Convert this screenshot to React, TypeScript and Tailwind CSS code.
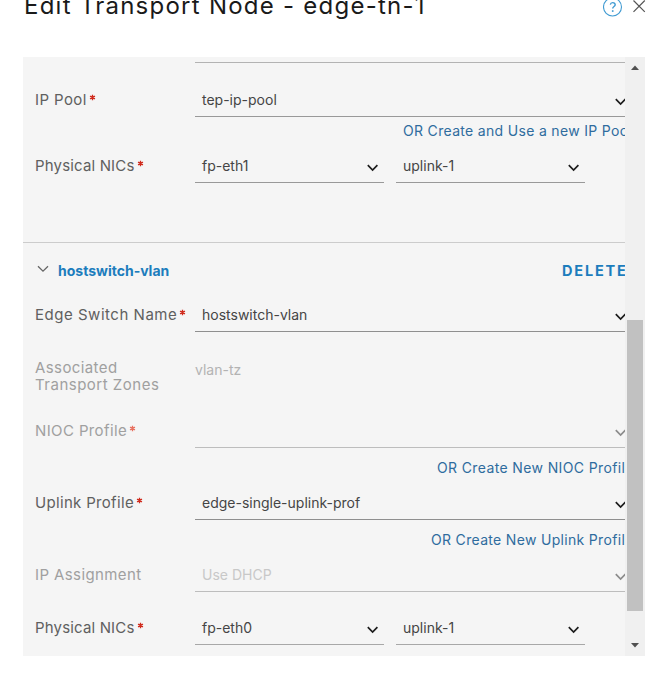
import React from "react";

type Tone = "normal" | "dim" | "disabled";

function Chevron({ className = "" }: { className?: string }) {
  return (
    <svg width="12" height="8" viewBox="0 0 12 8" fill="none" className={"shrink-0 " + className}>
      <path d="M0.8 1.2 L5.6 6 L10.4 1.2" stroke="currentColor" strokeWidth="1.7" />
    </svg>
  );
}

function Label({ text, tracking, required, dim }: { text: string; tracking: string; required?: boolean; dim?: boolean }) {
  return (
    <div className={"flex w-[160px] shrink-0 whitespace-nowrap text-[15px] leading-[32px] " + (dim ? "text-[#a0a0a0]" : "text-[#606060]")}>
      <span className={tracking}>{text}</span>
      {required && (
        <svg width="7" height="7" viewBox="0 0 8 8" className={"ml-[2px] mt-[10px] shrink-0 " + (dim ? "text-[#e8705f]" : "text-[#d02a1c]")}>
          <path d="M4 0.8V7.2M1.2 2.4L6.8 5.6M6.8 2.4L1.2 5.6" stroke="currentColor" strokeWidth="1.5" />
        </svg>
      )}
    </div>
  );
}

function Select({ value, width, line, tone = "normal" }: { value: string; width: string; line: string; tone?: Tone }) {
  const color = tone === "normal" ? "text-[#454545]" : "text-[#c8c8c8]";
  return (
    <div className={"flex h-[33px] shrink-0 items-center justify-between border-b pl-[7px] " + width + " " + line}>
      <span className={"whitespace-nowrap text-[14px] leading-[32px] " + color}>{value}</span>
      <Chevron className={"mt-[3px] mr-[5px] " + (tone === "normal" ? "text-[#1c1c1c]" : "text-[#8c8c8c]")} />
    </div>
  );
}

function Row({ children, className = "" }: { children: React.ReactNode; className?: string }) {
  return <div className={"flex pl-3 " + className}>{children}</div>;
}

function LinkText({ text, className }: { text: string; className: string }) {
  return <div className={"whitespace-nowrap text-[14px] text-[#2f6c9e] " + className}>{text}</div>;
}

function Nics({ first, line }: { first: string; line: string }) {
  return (
    <>
      <Label text="Physical NICs" tracking="tracking-[0.16px]" required />
      <Select value={first} width="w-[189px]" line={line} />
      <div className="w-3 shrink-0" />
      <Select value="uplink-1" width="w-[189px]" line={line} />
    </>
  );
}

export default function App() {
  return (
    <div className="h-[677px] w-[651px] overflow-hidden bg-white font-['Inter','Liberation_Sans',sans-serif]">
      <header className="flex h-[57px] justify-between pl-[24px] pr-[5px]">
        <h1 className="-mt-[9.5px] whitespace-nowrap text-[24px] leading-[29px] tracking-[1.25px] text-[#1a1a1a]">
          Edit Transport Node - edge-tn-1
        </h1>
        <div className="flex gap-[10px]">
          <svg width="20" height="20" viewBox="0 0 20 20" fill="none" className="-mt-[3px]" stroke="#419bd2" strokeWidth="1.1">
            <circle cx="9.5" cy="10" r="9" />
            <path d="M7.3 7.6C7.6 6.2 8.4 5.6 9.6 5.6C11.2 5.6 12.2 6.4 12.2 7.8C12.2 9.6 9.7 9.5 9.7 11.6" strokeWidth="1.4" />
            <path d="M9.7 13.2V14.9" strokeWidth="1.6" />
          </svg>
          <svg width="13" height="13" viewBox="0 0 13 13" fill="none" stroke="#555" strokeWidth="1.2">
            <path d="M0.5 0.5L11.8 11.8M11.8 0.5L0.5 11.8" />
          </svg>
        </div>
      </header>

      <main className="ml-[23px] flex h-[599px] w-[622px] bg-[#f5f5f5]">
        <section className="w-[602px] overflow-hidden">
          <div className="ml-[172px] h-[6px] w-[442px] border-b border-[#b3b3b3]" />
          <Row className="mt-[21px]">
            <Label text="IP Pool" tracking="tracking-[0.4px]" required />
            <Select value="tep-ip-pool" width="w-[437px]" line="border-[#999]" />
          </Row>
          <LinkText text="OR Create and Use a new IP Pool" className="h-[33px] pl-[380px] leading-[27px] tracking-[0.32px]" />
          <Row>
            <Nics first="fp-eth1" line="border-[#999]" />
          </Row>

          <div className="mt-[59px] border-t border-[#cccccc]" />
          <div className="flex h-[56px] pl-[14px] leading-[55px]">
            <svg width="12" height="8" viewBox="0 0 12 8" fill="none" className="mt-[22px] shrink-0">
              <path d="M1 1.2L6 6.2L11 1.2" stroke="#666" strokeWidth="1.3" />
            </svg>
            <span className="ml-[9px] w-[504px] shrink-0 text-[14px] font-bold text-[#1c7dbd]">hostswitch-vlan</span>
            <span className="shrink-0 whitespace-nowrap text-[14.5px] font-bold tracking-[1.8px] text-[#1c7dbd]">DELETE</span>
          </div>

          <Row>
            <Label text="Edge Switch Name" tracking="tracking-[0.52px]" required />
            <Select value="hostswitch-vlan" width="w-[437px]" line="border-[#8f8f8f]" />
          </Row>
          <Row className="mt-[28px] h-[55px]">
            <div className="w-[160px] shrink-0 text-[15px] leading-[16.5px] text-[#a0a0a0]">
              <div className="tracking-[0.4px]">Associated</div>
              <div className="whitespace-nowrap tracking-[0.5px]">Transport Zones</div>
            </div>
            <span className="text-[14px] leading-[20px] text-[#b3b3b3]">vlan-tz</span>
          </Row>
          <Row>
            <Label text="NIOC Profile" tracking="tracking-[0.38px]" required dim />
            <Select value="" width="w-[437px]" line="border-[#bdbdbd]" tone="dim" />
          </Row>
          <LinkText text="OR Create New NIOC Profile" className="h-[39px] pl-[414px] leading-[39px] tracking-[0.37px]" />
          <Row>
            <Label text="Uplink Profile" tracking="tracking-[0.32px]" required />
            <Select value="edge-single-uplink-prof" width="w-[437px]" line="border-[#8f8f8f]" />
          </Row>
          <LinkText text="OR Create New Uplink Profile" className="h-[39px] pl-[408px] leading-[39px] tracking-[0.32px]" />
          <Row>
            <Label text="IP Assignment" tracking="tracking-[0.4px]" dim />
            <Select value="Use DHCP" width="w-[437px]" line="border-[#bdbdbd]" tone="disabled" />
          </Row>
          <Row className="mt-[20px]">
            <Nics first="fp-eth0" line="border-[#a8a8a8]" />
          </Row>
        </section>

        <aside className="flex w-5 flex-col items-center bg-[#f0f0f0]">
          <svg width="10" height="6" viewBox="0 0 10 6" className="mt-[7px] shrink-0">
            <path d="M1 6L5 1.5L9 6Z" fill="#505050" />
          </svg>
          <div className="mt-[250px] h-[291px] w-4 shrink-0 bg-[#c1c1c1]" />
          <svg width="10" height="6" viewBox="0 0 10 6" className="mt-[32px] shrink-0">
            <path d="M1 0L5 4.5L9 0Z" fill="#505050" />
          </svg>
        </aside>
      </main>
    </div>
  );
}
